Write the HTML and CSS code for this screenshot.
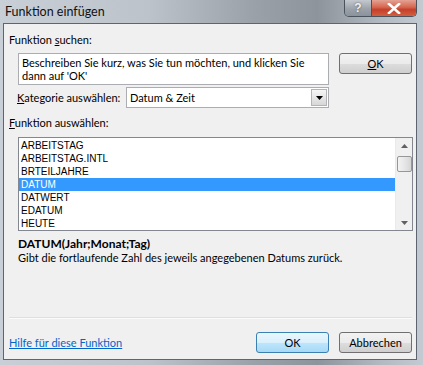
FILE: index.html
```html
<!DOCTYPE html>
<html>
<head>
	<meta charset="utf-8">
	<title>Funktion einfügen</title>
	<link rel="stylesheet" href="styles.css">
</head>
<body>
	<div class="window">
		<!-- title bar with the two caption buttons -->
		<div class="titlebar">
			<span class="title">Funktion einfügen</span>
			<div class="caption">
				<span class="cap-help">?</span>
				<span class="cap-close">
					<svg width="14" height="11" viewBox="0 0 14 11"><path d="M2 1 L12 10 M12 1 L2 10" stroke="#fff" stroke-width="2.6" stroke-linecap="square"/></svg>
				</span>
			</div>
		</div>

		<div class="client">
			<div class="label"><span>Funktion <u>s</u>uchen:</span></div>
			<div class="search-row">
				<div class="textbox">Beschreiben Sie kurz, was Sie tun möchten, und klicken Sie dann auf 'OK'</div>
				<button class="btn btn-ok-top"><u>O</u>K</button>
			</div>
			<div class="cat-row">
				<span class="cat-label"><u>K</u>ategorie auswählen:</span>
				<div class="combo">
					<span>Datum &amp; Zeit</span>
					<span class="combo-btn"><svg width="7" height="4" viewBox="0 0 7 4"><path d="M0 0 H7 L3.5 4 Z" fill="#000"/></svg></span>
				</div>
			</div>
			<div class="label label-list"><u>F</u>unktion auswählen:</div>
			<div class="listbox">
				<ul class="items">
					<li>ARBEITSTAG</li>
					<li>ARBEITSTAG.INTL</li>
					<li>BRTEILJAHRE</li>
					<li class="selected">DATUM</li>
					<li>DATWERT</li>
					<li>EDATUM</li>
					<li>HEUTE</li>
				</ul>
				<div class="scrollbar">
					<svg class="arrow" width="7" height="4" viewBox="0 0 7 4"><path d="M0 4 H7 L3.5 0 Z" fill="#606060"/></svg>
					<div class="thumb"></div>
					<div class="track"></div>
					<svg class="arrow" width="7" height="4" viewBox="0 0 7 4"><path d="M0 0 H7 L3.5 4 Z" fill="#606060"/></svg>
				</div>
			</div>
			<div class="syntax">DATUM(Jahr;Monat;Tag)</div>
			<div class="desc">Gibt die fortlaufende Zahl des jeweils angegebenen Datums zurück.</div>
			<div class="spacer"></div>
			<hr class="sep">
			<div class="footer">
				<a class="help" href="#">Hilfe für diese Funktion</a>
				<button class="btn btn-default">OK</button>
				<button class="btn btn-cancel">Abbrechen</button>
			</div>
		</div>
	</div>
</body>
</html>
```

FILE: styles.css
```css
*{
	margin: 0;
	padding: 0;
	box-sizing: border-box;
}
body{
	font-family: Lato, "Liberation Sans", sans-serif;
	font-size: 11px;
	color: #000;
}
.window{
	width: 423px;
	height: 365px;
	padding: 0 6px 5px 3px;
	display: flex;
	flex-direction: column;
	background: linear-gradient(90deg, #c9cfd6 0%, #bcc3cb 35%, #9aa1a9 60%, #8d949c 75%, #b3b9c0 90%, #c4cad1 100%);
}
.titlebar{
	height: 23px;
	display: flex;
	justify-content: space-between;
	align-items: flex-start;
}
.title{
	padding: 4px 0 0 2px;
	font-size: 12.5px;
	color: #111;
}
.caption{
	display: flex;
	height: 17px;
	border: 1px solid #4a525c;
	border-top: none;
	border-radius: 0 0 5px 5px;
	overflow: hidden;
}
.cap-help{
	width: 27px;
	text-align: center;
	font-family: "Liberation Sans", sans-serif;
	font-weight: bold;
	font-size: 12px;
	line-height: 16px;
	color: #eef0f2;
	background: linear-gradient(#c4c9cf, #9ba2aa 55%, #8a929b);
	border-right: 1px solid #4a525c;
	text-shadow: 0 0 2px #555;
}
.cap-close{
	width: 44px;
	display: flex;
	align-items: center;
	justify-content: center;
	background: linear-gradient(#e3a394, #d6664f 45%, #c4402a 60%, #d2603f);
}
.client{
	flex: 1;
	display: flex;
	flex-direction: column;
	background: #f0f0f0;
	border: 1px solid #5d6670;
	padding: 8px 4px 6px 5px;
}
.label{
	line-height: 16px;
}
.search-row{
	display: flex;
	align-items: flex-start;
	margin-top: 5px;
	margin-left: 9px;
}
.textbox{
	width: 312px;
	height: 32px;
	background: #fff;
	border: 1px solid #abadb3;
	padding: 2px 3px;
	line-height: 13px;
}
.btn{
	font-family: inherit;
	font-size: 11px;
	height: 21px;
	width: 73px;
	border: 1px solid #707070;
	border-radius: 3px;
	background: linear-gradient(#f2f2f2 0%, #ebebeb 50%, #dddddd 51%, #cfcfcf 100%);
	color: #000;
}
.btn-ok-top{
	margin-left: 10px;
}
.cat-row{
	display: flex;
	align-items: center;
	margin-top: 2px;
	margin-left: 8px;
}
.cat-label{
	flex: none;
	width: 109px;
	white-space: nowrap;
}
.combo{
	width: 203px;
	height: 21px;
	display: flex;
	align-items: center;
	justify-content: space-between;
	background: #fff;
	border: 1px solid #abadb3;
	padding: 0 1px 0 3px;
}
.combo-btn{
	width: 16px;
	height: 17px;
	display: flex;
	align-items: center;
	justify-content: center;
	border: 1px solid #b4b4b4;
	background: linear-gradient(#f6f6f6, #d7d7d7);
}
.label-list{
	margin-top: 7px;
}
.listbox{
	margin: 6px 0 0 9px;
	width: 395px;
	height: 94px;
	display: flex;
	background: #fff;
	border: 1px solid #828790;
}
.items{
	flex: 1;
	list-style: none;
	padding-top: 1px;
	font-family: "Liberation Sans", sans-serif;
	font-size: 10px;
}
.items li{
	height: 13px;
	line-height: 13px;
	padding-left: 2px;
}
.items li.selected{
	background: #3399ff;
	color: #fff;
}
.scrollbar{
	width: 17px;
	display: flex;
	flex-direction: column;
	align-items: center;
	background: #f0f0f0;
	border-left: 1px solid #eaeaea;
	padding: 6px 0 5px;
}
.arrow{
	flex: none;
}
.thumb{
	margin-top: 8px;
	width: 15px;
	height: 16px;
	border: 1px solid #979797;
	border-radius: 2px;
	background: linear-gradient(90deg, #f3f3f3, #e6e6e6 50%, #d6d6d6);
}
.track{
	flex: 1;
}
.syntax{
	margin: 6px 0 0 9px;
	font-size: 12px;
	font-weight: bold;
	line-height: 14px;
}
.desc{
	margin-left: 9px;
	line-height: 14px;
}
.spacer{
	flex: 1;
}
.sep{
	border: none;
	border-top: 1px solid #dfdfdf;
	border-bottom: 1px solid #fbfbfb;
}
.footer{
	display: flex;
	align-items: center;
	margin-top: 13px;
}
.help{
	flex: 1;
	color: #0066cc;
	text-decoration: underline;
}
.btn-default{
	border-color: #3c7fb1;
	background: linear-gradient(#eaf6fd 0%, #d9f0fc 50%, #bee6fd 51%, #a7d9f5 100%);
}
.btn-cancel{
	margin-left: 10px;
}
```
